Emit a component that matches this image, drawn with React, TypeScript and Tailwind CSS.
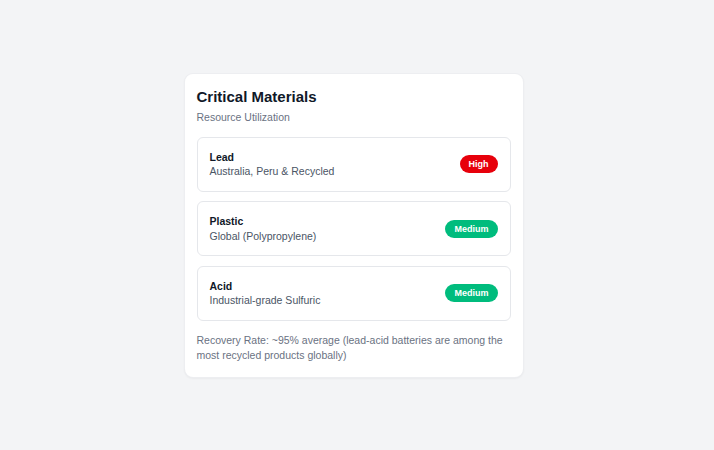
import React from "react";

type Item = { name: string; source: string; level: "High" | "Medium" };

const items: Item[] = [
  { name: "Lead", source: "Australia, Peru & Recycled", level: "High" },
  { name: "Plastic", source: "Global (Polypropylene)", level: "Medium" },
  { name: "Acid", source: "Industrial-grade Sulfuric", level: "Medium" },
];

export default function App() {
  return (
    <div
      className="min-h-[450px] w-full bg-gray-100 flex items-center justify-center pr-[7px]"
      style={{ fontFamily: '"Liberation Sans", Arial, sans-serif' }}
    >
      <div className="w-[340px] bg-white border border-gray-200/70 rounded-[9px] shadow-[0_1px_2px_rgba(0,0,0,0.04)] px-3 pt-3 pb-[13px]">
        <h2 className="text-[15px] leading-[21px] font-bold text-gray-900">Critical Materials</h2>
        <p className="mt-[3px] text-[10.5px] leading-[15px] text-gray-500">Resource Utilization</p>
        <div className="mt-3 flex flex-col gap-[9.5px]">
          {items.map((it) => (
            <div
              key={it.name}
              className="h-[55px] border border-gray-200 rounded-[6px] px-3 flex items-center justify-between"
            >
              <div>
                <div className="text-[10.5px] leading-[14.5px] font-semibold text-gray-900">{it.name}</div>
                <div className="text-[10.5px] leading-[14.5px] text-gray-600">{it.source}</div>
              </div>
              <span
                className={
                  it.level === "High"
                    ? "rounded-full bg-red-600 text-white text-[9px] leading-[12px] font-bold px-[9px] py-[3px]"
                    : "rounded-full bg-emerald-500 text-white text-[9px] leading-[12px] font-bold px-[9px] py-[3px]"
                }
              >
                {it.level}
              </span>
            </div>
          ))}
        </div>
        <p className="mt-3 text-[10.5px] leading-[15.5px] text-gray-500">
          Recovery Rate: ~95% average (lead-acid batteries are among the most recycled products globally)
        </p>
      </div>
    </div>
  );
}
